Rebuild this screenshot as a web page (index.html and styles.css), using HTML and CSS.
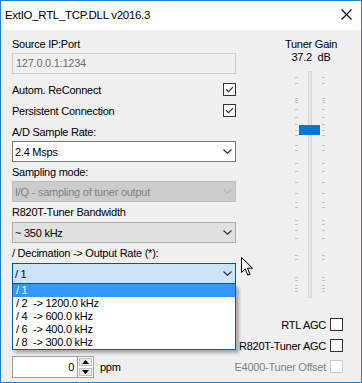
FILE: index.html
```html
<!DOCTYPE html>
<html lang="en">
<head>
  <meta charset="UTF-8" />
  <title>ExtIO_RTL_TCP.DLL v2016.3</title>
  <link rel="stylesheet" href="styles.css">
</head>
<body>
  <div class="window">
    <div class="titlebar">
      <span class="title">ExtIO_RTL_TCP.DLL v2016.3</span>
      <svg class="close" width="11" height="11" viewBox="0 0 11 11">
        <path d="M0.5 0.5 L10.5 10.5 M10.5 0.5 L0.5 10.5" stroke="#000" stroke-width="1.1" />
      </svg>
    </div>

    <div class="content">
      <!-- Left column: connection + sampling settings -->
      <div class="left">
        <div class="label">Source IP:Port</div>
        <div class="textbox disabled">127.0.0.1:1234</div>

        <div class="check-row first">
          <span>Autom. ReConnect</span>
          <svg class="cb" width="13" height="13" viewBox="0 0 13 13">
            <rect x="0.5" y="0.5" width="12" height="12" fill="#fff" stroke="#333" />
            <path d="M3 6.3 L5.4 8.7 L10 4.1" fill="none" stroke="#333" stroke-width="1.2" />
          </svg>
        </div>
        <div class="check-row">
          <span>Persistent Connection</span>
          <svg class="cb" width="13" height="13" viewBox="0 0 13 13">
            <rect x="0.5" y="0.5" width="12" height="12" fill="#fff" stroke="#333" />
            <path d="M3 6.3 L5.4 8.7 L10 4.1" fill="none" stroke="#333" stroke-width="1.2" />
          </svg>
        </div>

        <div class="label gap-big">A/D Sample Rate:</div>
        <div class="combo">
          <span>2.4 Msps</span>
          <svg class="chev" width="9" height="5" viewBox="0 0 9 5"><path d="M0.5 0.5 L4.5 4.3 L8.5 0.5" fill="none" stroke="#333" stroke-width="1.2" /></svg>
        </div>

        <div class="label">Sampling mode:</div>
        <div class="combo disabled">
          <span>I/Q - sampling of tuner output</span>
          <svg class="chev" width="9" height="5" viewBox="0 0 9 5"><path d="M0.5 0.5 L4.5 4.3 L8.5 0.5" fill="none" stroke="#b5b5b5" stroke-width="1.2" /></svg>
        </div>

        <div class="label">R820T-Tuner Bandwidth</div>
        <div class="combo button">
          <span>~ 350 kHz</span>
          <svg class="chev" width="9" height="5" viewBox="0 0 9 5"><path d="M0.5 0.5 L4.5 4.3 L8.5 0.5" fill="none" stroke="#333" stroke-width="1.2" /></svg>
        </div>

        <div class="label">/ Decimation -&gt; Output Rate (*):</div>
        <div class="combo-wrap">
          <div class="combo focused">
            <span>/ 1</span>
            <svg class="chev" width="9" height="5" viewBox="0 0 9 5"><path d="M0.5 0.5 L4.5 4.3 L8.5 0.5" fill="none" stroke="#333" stroke-width="1.2" /></svg>
          </div>
          <!-- open dropdown list -->
          <div class="droplist">
            <div class="opt sel">/ 1</div>
            <div class="opt">/ 2  -&gt; 1200.0 kHz</div>
            <div class="opt">/ 4  -&gt; 600.0 kHz</div>
            <div class="opt">/ 6  -&gt; 400.0 kHz</div>
            <div class="opt">/ 8  -&gt; 300.0 kHz</div>
          </div>
        </div>

        <div class="spin-row">
          <div class="spin">
            <div class="spin-val">0</div>
            <div class="spin-btns">
              <div class="spin-btn"><svg width="7" height="4" viewBox="0 0 7 4"><path d="M0 4 L3.5 0 L7 4 Z" fill="#000" /></svg></div>
              <div class="spin-btn"><svg width="7" height="4" viewBox="0 0 7 4"><path d="M0 0 L7 0 L3.5 4 Z" fill="#000" /></svg></div>
            </div>
          </div>
          <span class="ppm">ppm</span>
        </div>
      </div>

      <!-- Right column: tuner gain slider + AGC options -->
      <div class="right">
        <div class="gain">
          <div class="label center">Tuner Gain</div>
          <div class="label center gain-val">37.2&nbsp; dB</div>
          <div class="slider">
            <div class="track"></div>
            <!-- tick positions follow the R820T gain table -->
            <span class="tick" style="top:6px"></span>
            <span class="tick" style="top:12px"></span>
            <span class="tick" style="top:27px"></span>
            <span class="tick" style="top:29px"></span>
            <span class="tick" style="top:31px"></span>
            <span class="tick" style="top:38px"></span>
            <span class="tick" style="top:46px"></span>
            <span class="tick" style="top:53px"></span>
            <span class="tick" style="top:59px"></span>
            <span class="tick" style="top:64px"></span>
            <span class="tick" style="top:74px"></span>
            <span class="tick" style="top:79px"></span>
            <span class="tick" style="top:92px"></span>
            <span class="tick" style="top:100px"></span>
            <span class="tick" style="top:111px"></span>
            <span class="tick" style="top:122px"></span>
            <span class="tick" style="top:131px"></span>
            <span class="tick" style="top:136px"></span>
            <span class="tick" style="top:149px"></span>
            <span class="tick" style="top:153px"></span>
            <span class="tick" style="top:159px"></span>
            <span class="tick" style="top:167px"></span>
            <span class="tick" style="top:184px"></span>
            <span class="tick" style="top:188px"></span>
            <span class="tick" style="top:206px"></span>
            <span class="tick" style="top:209px"></span>
            <span class="tick" style="top:214px"></span>
            <span class="tick" style="top:217px"></span>
            <span class="tick" style="top:220px"></span>
            <div class="thumb" style="top:54px"></div>
          </div>
        </div>

        <div class="agc">
          <div class="agc-row">
            <span>RTL AGC</span>
            <svg class="cb" width="13" height="13" viewBox="0 0 13 13"><rect x="0.5" y="0.5" width="12" height="12" fill="#fff" stroke="#333" /></svg>
          </div>
          <div class="agc-row">
            <span>R820T-Tuner AGC</span>
            <svg class="cb" width="13" height="13" viewBox="0 0 13 13"><rect x="0.5" y="0.5" width="12" height="12" fill="#fff" stroke="#333" /></svg>
          </div>
          <div class="agc-row off">
            <span>E4000-Tuner Offset</span>
            <svg class="cb" width="13" height="13" viewBox="0 0 13 13"><rect x="0.5" y="0.5" width="12" height="12" fill="#fff" stroke="#cccccc" /></svg>
          </div>
        </div>
      </div>
    </div>

    <!-- mouse pointer -->
    <svg class="cursor" width="13" height="20" viewBox="0 0 13 20">
      <path d="M0.5 0.5 L0.5 15.5 L4.2 12 L6.8 18.2 L9 17.2 L6.5 11.2 L11.5 11.2 Z" fill="#fff" stroke="#000" stroke-width="1" stroke-linejoin="miter" />
    </svg>
  </div>
</body>
</html>
```

FILE: styles.css
```css
body {
  margin: 0;
  padding: 0;
  font-family: "Liberation Sans", Arial, sans-serif;
  font-size: 11px;
  letter-spacing: -0.25px;
  color: #000;
  background: #fff;
}

.window {
  width: 362px;
  height: 383px;
  box-sizing: border-box;
  border: 1px solid #1883d7;
  background: #f0f0f0;
  position: relative;
  display: flex;
  flex-direction: column;
}

/* Title bar */
.titlebar {
  height: 29px;
  background: #fff;
  display: flex;
  align-items: center;
  justify-content: space-between;
  padding: 0 9px 0 4px;
}
.title {
  font-size: 11.5px;
  letter-spacing: -0.3px;
  margin-top: -1px;
}
.close {
  display: block;
  margin-top: -3px;
}

.content {
  flex: 1;
  display: flex;
}

/* Left column */
.left {
  width: 224px;
  margin-left: 11px;
  padding-top: 8px;
}

.label {
  height: 13px;
  line-height: 13px;
  white-space: nowrap;
  margin-top: 4px;
}
.left > .label:first-child {
  margin-top: 0;
}
.label.gap-big {
  margin-top: 9px;
}
.label.center {
  text-align: center;
  margin-top: 0;
}

.textbox {
  height: 21px;
  box-sizing: border-box;
  margin-top: 2px;
  padding-left: 3px;
  line-height: 19px;
  border: 1px solid #cccccc;
}
.textbox.disabled {
  background: #f0f0f0;
  color: #6d6d6d;
}

.check-row {
  display: flex;
  justify-content: space-between;
  align-items: center;
  height: 13px;
  margin-top: 8px;
}
.check-row.first {
  margin-top: 9px;
}
.cb {
  display: block;
  flex-shrink: 0;
}

/* Combo boxes */
.combo {
  height: 21px;
  box-sizing: border-box;
  margin-top: 2px;
  display: flex;
  align-items: center;
  justify-content: space-between;
  padding: 0 3px 0 2px;
  border: 1px solid #7a7a7a;
  background: #fff;
  white-space: nowrap;
}
.combo.disabled {
  background: #cccccc;
  border-color: #bfbfbf;
  color: #838383;
}
.combo.button {
  background: #e1e1e1;
  border-color: #adadad;
  margin-top: 3px;
}
.combo.focused {
  background: #cce4f7;
  border-color: #005499;
}
.chev {
  display: block;
}

.combo-wrap {
  position: relative;
  margin-top: 3px;
}
.combo-wrap .combo {
  margin-top: 0;
}

/* Dropdown list shown over the form */
.droplist {
  position: absolute;
  top: 100%;
  left: 0;
  width: 224px;
  box-sizing: border-box;
  background: #fff;
  border: 1px solid #1c5a9c;
  border-top: 0;
  box-shadow: 3px 3px 3px rgba(0, 0, 0, 0.3);
  z-index: 2;
}
.opt {
  height: 13px;
  line-height: 13px;
  padding-left: 3px;
  white-space: pre;
}
.opt.sel {
  background: #3399ff;
  color: #fff;
}

/* Spin box */
.spin-row {
  display: flex;
  align-items: center;
  margin-top: 72px;
}
.spin {
  display: flex;
  height: 22px;
}
.spin-val {
  width: 65px;
  box-sizing: border-box;
  border: 1px solid #a0a0a0;
  border-right: 0;
  background: #fff;
  text-align: right;
  padding-right: 3px;
  line-height: 20px;
}
.spin-btns {
  width: 17px;
  display: flex;
  flex-direction: column;
  border: 1px solid #a0a0a0;
  box-sizing: border-box;
  background: #fff;
}
.spin-btn {
  flex: 1;
  display: flex;
  align-items: center;
  justify-content: center;
  margin: 1px;
  background: #e9e9e9;
  border: 1px solid #c4c4c4;
}
.spin-btn svg {
  display: block;
}
.ppm {
  margin-left: 6px;
}

/* Right column */
.right {
  flex: 1;
  display: flex;
  flex-direction: column;
  padding-top: 8px;
  min-width: 0;
}
.gain {
  width: 64px;
  margin-left: 43px;
}
.gain-val {
  margin-top: 4px;
}

.slider {
  position: relative;
  height: 227px;
  margin-top: 7px;
}
.track {
  position: absolute;
  left: 29px;
  top: 0;
  width: 4px;
  height: 100%;
  box-sizing: border-box;
  background: #e7eaea;
  border: 1px solid #d6d6d6;
}
.tick {
  position: absolute;
  left: 16px;
  width: 3px;
  height: 1px;
  background: #c2c2c2;
}
.tick::after {
  content: "";
  position: absolute;
  left: 27px;
  top: 0;
  width: 3px;
  height: 1px;
  background: #c2c2c2;
}
.thumb {
  position: absolute;
  left: 20px;
  width: 21px;
  height: 10px;
  background: #0078d7;
}

.agc {
  margin-top: 20px;
  padding-right: 18px;
}
.agc-row {
  display: flex;
  justify-content: flex-end;
  align-items: center;
  gap: 4px;
  height: 13px;
  margin-bottom: 8px;
  white-space: nowrap;
}
.agc-row.off {
  color: #838383;
}

.cursor {
  position: absolute;
  left: 240px;
  top: 256px;
  z-index: 3;
}
```
